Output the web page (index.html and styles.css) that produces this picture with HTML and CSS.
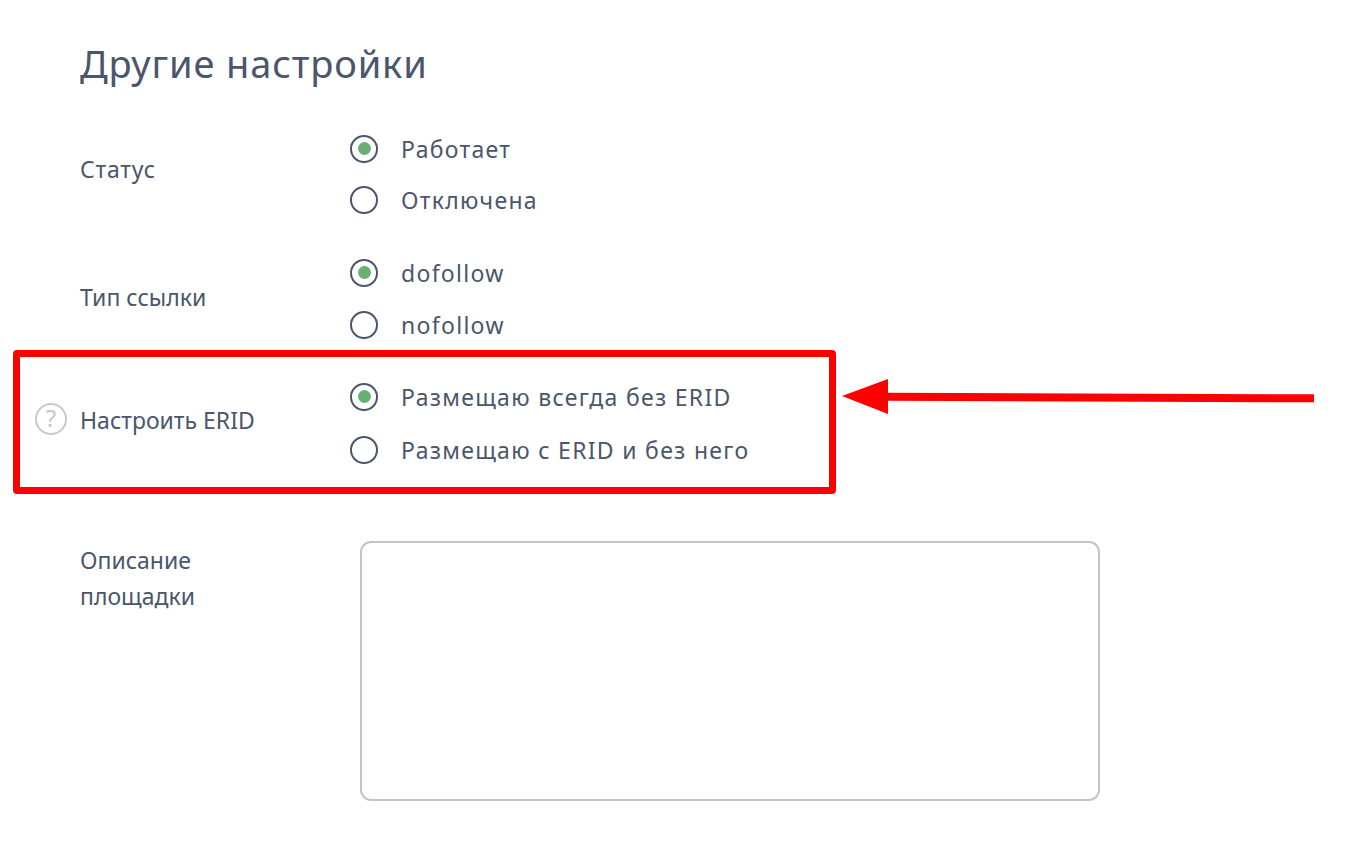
FILE: index.html
```html
<!DOCTYPE html>
<html lang="ru">
  <head>
    <meta charset="utf-8" />
    <title>Другие настройки</title>
    <link rel="stylesheet" href="styles.css">
  </head>
  <body>
    <h1 class="title">Другие настройки</h1>

    <div class="row row-status">
      <div class="row-label">Статус</div>
      <div class="options">
        <div class="option"><span class="radio checked"></span>Работает</div>
        <div class="option"><span class="radio"></span>Отключена</div>
      </div>
    </div>

    <div class="row row-link">
      <div class="row-label">Тип ссылки</div>
      <div class="options">
        <div class="option"><span class="radio checked"></span>dofollow</div>
        <div class="option"><span class="radio"></span>nofollow</div>
      </div>
    </div>

    <div class="row row-erid">
      <div class="row-label">
        <span class="hint">?</span>
        Настроить ERID
      </div>
      <div class="options">
        <div class="option"><span class="radio checked"></span>Размещаю всегда без ERID</div>
        <div class="option"><span class="radio"></span>Размещаю с ERID и без него</div>
      </div>
    </div>

    <div class="row row-desc">
      <div class="row-label desc-label">Описание<br />площадки</div>
      <div class="desc-box"></div>
    </div>

    <!-- annotation on top of the form -->
    <div class="red-box"></div>
    <svg class="red-arrow" width="480" height="40" viewBox="0 0 480 40">
      <polygon points="2,18 48,1 48,14.7 474,16.3 474,24.3 48,22.7 48,36" fill="#ff0000" />
    </svg>
  </body>
</html>
```

FILE: styles.css
```css
html,
body {
  margin: 0;
  padding: 0;
  background: #fff;
}
body {
  position: relative;
  height: 842px;
  overflow: hidden;
  padding-left: 80px;
  font-family: "Noto Sans", "Open Sans", sans-serif;
  color: #4b566b;
  font-size: 23px;
}
.title {
  margin: 0;
  padding-top: 36px;
  height: 135px;
  box-sizing: border-box;
  font-size: 38px;
  line-height: 54px;
  font-weight: 400;
  letter-spacing: 0.85px;
}
.row {
  display: flex;
  align-items: center;
}
.row-label {
  width: 270px;
  flex: none;
  position: relative;
  padding-bottom: 7px;
}
.row-status .row-label {
  padding-bottom: 10px;
  letter-spacing: 0.8px;
}
.row-link .row-label {
  padding-bottom: 3px;
}
.options {
  display: flex;
  flex-direction: column;
  gap: 24px;
}
.option {
  display: flex;
  align-items: center;
  height: 27px;
  letter-spacing: 1.3px;
}
.radio {
  width: 28px;
  height: 28px;
  flex: none;
  box-sizing: border-box;
  border: 2px solid #4b566b;
  border-radius: 50%;
  margin-right: 23px;
  display: flex;
  align-items: center;
  justify-content: center;
}
.radio.checked::after {
  content: "";
  width: 13px;
  height: 13px;
  border-radius: 50%;
  background: #68b074;
}
.row-link {
  margin-top: 46px;
}
.row-link .options {
  gap: 25px;
}
.row-erid {
  margin-top: 45px;
}
.row-erid .options {
  gap: 26px;
}
.row-desc {
  margin-top: 78px;
  align-items: flex-start;
}
.desc-label {
  width: 280px;
  line-height: 36px;
  margin-top: 1px;
  padding-bottom: 0;
}
.desc-box {
  width: 740px;
  height: 260px;
  box-sizing: border-box;
  border: 2px solid #c4c4c4;
  border-radius: 11px;
}
.hint {
  position: absolute;
  left: -45px;
  top: calc(50% - 4px);
  transform: translateY(-50%);
  width: 32px;
  height: 32px;
  box-sizing: border-box;
  border: 2px solid #c8c8c8;
  border-radius: 50%;
  color: #c8c8c8;
  font-size: 24px;
  line-height: 26px;
  text-align: center;
}
.red-box {
  position: absolute;
  left: 13px;
  top: 350px;
  width: 823px;
  height: 144px;
  box-sizing: border-box;
  border: 7px solid #ff0000;
  border-radius: 4px;
}
.red-arrow {
  position: absolute;
  left: 840px;
  top: 378px;
}
```
